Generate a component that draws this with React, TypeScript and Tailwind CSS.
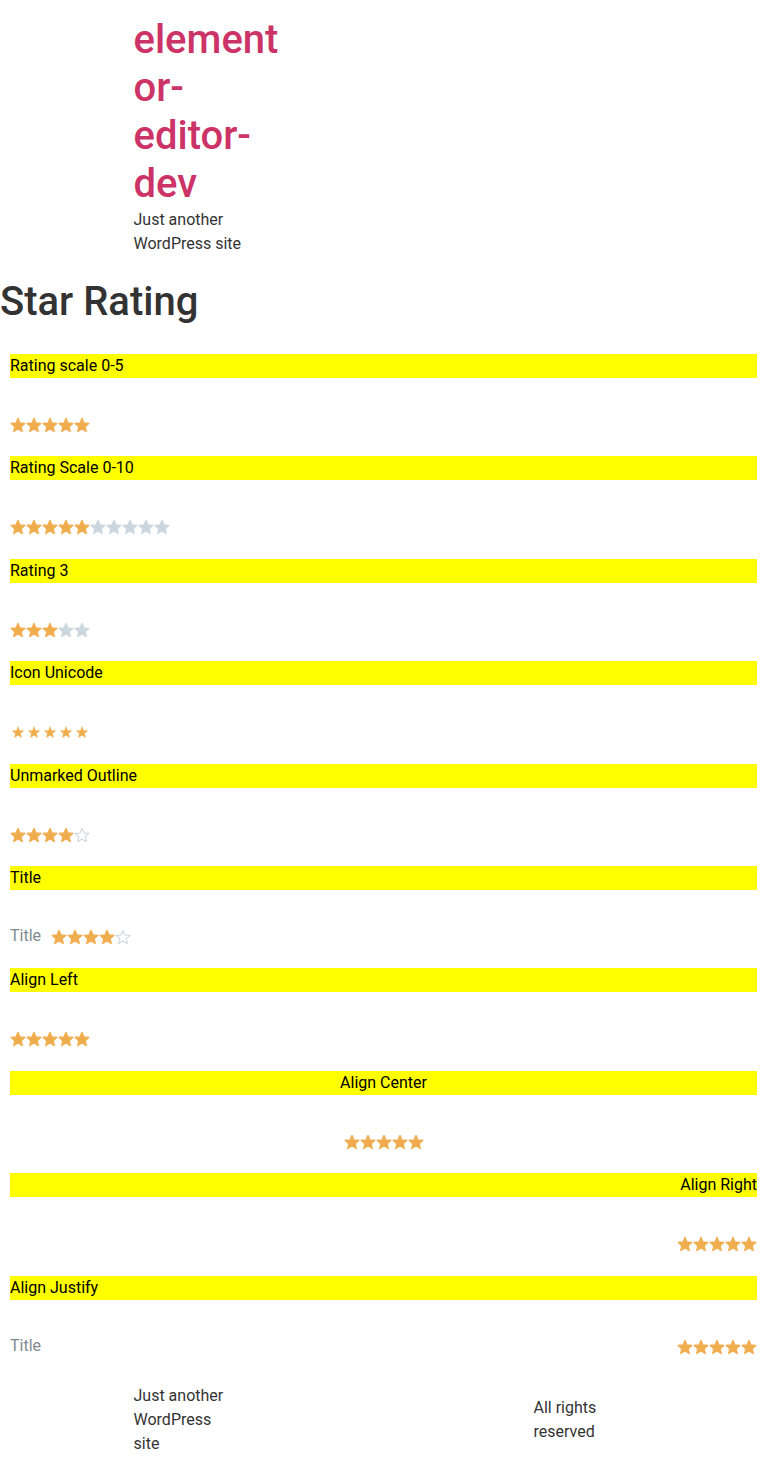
import React from "react";

const STAR = "12,2 14.94,8.95 22.46,9.6 16.76,14.55 18.47,21.9 12,18 5.53,21.9 7.24,14.55 1.54,9.6 9.06,8.95";
const SHARP = "12,3 14.47,9.6 21.51,9.91 15.99,14.3 17.88,21.09 12,17.2 6.12,21.09 8.01,14.3 2.49,9.91 9.53,9.6";

type Kind = "on" | "off" | "outline" | "uni";

function Star({ kind }: { kind: Kind }) {
  if (kind === "uni") {
    return (
      <svg width="16" height="16" viewBox="0 0 24 24" className="block">
        <polygon points={SHARP} fill="#f0ad4e" />
      </svg>
    );
  }
  if (kind === "outline") {
    return (
      <svg width="16" height="16" viewBox="0 0 24 24" className="block">
        <polygon points={STAR} fill="none" stroke="#ccd6df" strokeWidth="1.6" strokeLinejoin="round" />
      </svg>
    );
  }
  const c = kind === "on" ? "#f0ad4e" : "#ccd6df";
  return (
    <svg width="16" height="16" viewBox="0 0 24 24" className="block">
      <polygon points={STAR} fill={c} stroke={c} strokeWidth="1.8" strokeLinejoin="round" />
    </svg>
  );
}

function Stars({ kinds }: { kinds: Kind[] }) {
  return (
    <div className="flex">
      {kinds.map((k, i) => (
        <Star key={i} kind={k} />
      ))}
    </div>
  );
}

function Section({
  label,
  labelAlign = "text-left",
  children,
}: {
  label: string;
  labelAlign?: string;
  children: React.ReactNode;
}) {
  return (
    <div className="h-[102.4px] flex flex-col">
      <div className={`bg-[#ffff00] h-6 leading-6 text-base text-black ${labelAlign}`}>{label}</div>
      <div className="mt-[39px] h-4 flex items-center">{children}</div>
    </div>
  );
}

const five: Kind[] = ["on", "on", "on", "on", "on"];

export default function App() {
  return (
    <div className="font-['Roboto',sans-serif] text-[#333333] bg-white w-[767px] min-h-[1472px]">
      <header className="mx-auto w-[500px] pt-[16px] pb-[15px]">
        <div className="w-[150px]">
          <p className="text-[40px] leading-[48px] font-medium text-[#cc3366] break-words">
            elementor-editor-dev
          </p>
          <p className="text-base leading-6">Just another WordPress site</p>
        </div>
      </header>
      <h1 className="mt-[7px] text-[40px] leading-[48px] font-medium text-[#333333]">Star Rating</h1>
      <main className="px-[10px] pt-[28px]">
        <Section label="Rating scale 0-5">
          <Stars kinds={five} />
        </Section>
        <Section label="Rating Scale 0-10">
          <Stars kinds={["on", "on", "on", "on", "on", "off", "off", "off", "off", "off"]} />
        </Section>
        <Section label="Rating 3">
          <Stars kinds={["on", "on", "on", "off", "off"]} />
        </Section>
        <Section label="Icon Unicode">
          <Stars kinds={["uni", "uni", "uni", "uni", "uni"]} />
        </Section>
        <Section label="Unmarked Outline">
          <Stars kinds={["on", "on", "on", "on", "outline"]} />
        </Section>
        <Section label="Title">
          <div className="flex items-center gap-[10px]">
            <span className="text-base leading-6 text-[#818a91] -mt-px">Title</span>
            <Stars kinds={["on", "on", "on", "on", "outline"]} />
          </div>
        </Section>
        <Section label="Align Left">
          <Stars kinds={five} />
        </Section>
        <Section label="Align Center" labelAlign="text-center">
          <div className="w-full flex justify-center">
            <Stars kinds={five} />
          </div>
        </Section>
        <Section label="Align Right" labelAlign="text-right">
          <div className="w-full flex justify-end">
            <Stars kinds={five} />
          </div>
        </Section>
        <Section label="Align Justify">
          <div className="w-full flex justify-between items-center">
            <span className="text-base leading-6 text-[#818a91] -mt-px">Title</span>
            <Stars kinds={five} />
          </div>
        </Section>
      </main>
      <footer className="mx-auto w-[500px] pt-[6px] flex justify-between items-center text-base leading-6">
        <p className="w-[100px]">Just another WordPress site</p>
        <p className="w-[100px]">All rights reserved</p>
      </footer>
    </div>
  );
}
